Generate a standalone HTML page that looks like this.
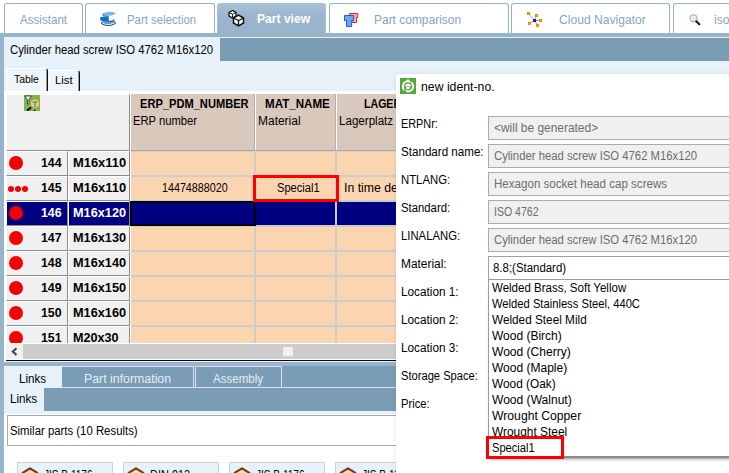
<!DOCTYPE html>
<html><head><meta charset="utf-8"><title>Part view</title>
<style>
*{box-sizing:border-box;margin:0;padding:0}
html,body{width:729px;height:473px;overflow:hidden;background:#fff}
body{position:relative;font-family:"Liberation Sans",sans-serif;font-size:12px;color:#000}
.a{position:absolute}
.t{position:absolute;white-space:nowrap;line-height:16px;height:16px;transform-origin:0 50%}
.b{font-weight:bold}
.tab{position:absolute;top:3px;height:30px;background:#fff;border:1px solid #98b2c7;border-bottom:none;border-radius:3px 3px 0 0}
.tab.act{background:linear-gradient(#a9c1d4,#9bb6cc 40%,#98b4ca);border-color:#a9c1d4}
.bg{background:#7b9cb5}
.lb{background:#e6f1f9}
.rh{position:absolute;background:#f0f0f0;height:25px;border-top:1px solid #fff;border-left:1px solid #fff;border-right:1px solid #8c8c8c}
.cell{position:absolute;background:#fbd5b0;height:24px}
.dot{position:absolute;width:14px;height:14px;border-radius:50%;background:#f40000}
.sd{position:absolute;width:6px;height:6px;border-radius:50%;background:#f40000}
.inp{position:absolute;left:488px;width:260px;height:24px;background:#f0f0f0;border:1px solid #ababab}
.card{position:absolute;top:462px;width:96px;height:20px;background:#e6f1f9;border:1px solid #c3d6e4}
</style></head><body>

<!-- frame + bands -->
<div class="a" style="left:0;top:33px;width:729px;height:4px;background:#98b4ca"></div>
<div class="a" style="left:0;top:33px;width:4px;height:440px;background:#98b4ca"></div>
<div class="a lb" style="left:4px;top:37px;width:725px;height:55px"></div>
<div class="a bg" style="left:220px;top:38px;width:509px;height:23px"></div>

<!-- top tabs -->
<div class="tab" style="left:4px;width:79px"></div>
<div class="tab" style="left:85px;width:130px"></div>
<div class="tab act" style="left:217px;width:109px"></div>
<div class="tab" style="left:329px;width:180px"></div>
<div class="tab" style="left:511px;width:159px"></div>
<div class="tab" style="left:673px;width:70px"></div>

<!-- tab icons -->
<svg class="a" style="left:100px;top:11px" width="17" height="16" viewBox="0 0 17 16">
 <path d="M1.6 11.4 Q8.5 8.6 15.2 11.2 L15.2 12.6 Q8.5 16.4 1.6 12.8Z" fill="#fff" stroke="#1c3f66" stroke-width="1"/>
 <path d="M1.4 11.2 Q8.5 8.4 15.4 11 Q12 13 8.5 13.2 Q5 13.4 1.4 11.2Z" fill="#5a9fe0"/>
 <path d="M0.2 6.6 Q7 4 14.8 6.4 L14.8 8.8 Q8 11.6 0.5 9.6Z" fill="#fff"/>
 <path d="M8.5 10.6 Q12 10.4 14.8 8.8" fill="none" stroke="#1c3f66" stroke-width=".9"/>
 <path d="M0.1 6.2 Q4 4.8 8.8 5.8 L8.8 10.8 Q4 11 0.4 9.6Z" fill="#1a6cb8"/>
 <path d="M2.3 2.6 Q9 -0.6 16 2.4 L16 4.6 Q12 6.8 9 6.6 L9 4.4Z" fill="#fff"/>
 <path d="M2.2 2.4 Q9 -0.8 16.1 2.2 Q12.5 4.8 9 4.8 Q5 4.8 2.2 2.4Z" fill="#7db5e6"/>
 <path d="M2.2 2.4 Q5 4.8 9 4.8 L9 6.6 Q5 6.6 2.5 4.8Z" fill="#3f8fd8"/>
</svg>
<svg class="a" style="left:227px;top:9px" width="19" height="18" viewBox="0 0 19 18">
 <path d="M2 3.5 L5.5 1.5 L9 3.5 L9 7 L5.5 9 L2 7Z" fill="#fff" stroke="#111" stroke-width="1.3"/>
 <path d="M2 3.5 L5.5 5.2 L9 3.5 M5.5 5.2 V9" fill="none" stroke="#111" stroke-width=".9"/>
 <path d="M6.5 9 L11.5 6.2 L16.5 9 L16.5 14 L11.5 16.8 L6.5 14Z" fill="#fff" stroke="#111" stroke-width="1.5"/>
 <path d="M6.5 9 L11.5 11.6 L16.5 9 M11.5 11.6 L11.5 16.8" fill="none" stroke="#111" stroke-width="1.3"/>
</svg>
<svg class="a" style="left:344px;top:13px" width="15" height="15" viewBox="0 0 15 15">
 <path d="M5.5 0.5 H13.7 V4.5 H12.6 V9.5 H8 V4.5 H5.5Z" fill="#f6aaaa" stroke="#f02222" stroke-width="1"/>
 <path d="M0.5 2.5 H9.6 V7.5 H7.7 V13.5 H2.5 V7.5 H0.5Z" fill="#6ea6e8" stroke="#1565d0" stroke-width="1"/>
</svg>
<svg class="a" style="left:526px;top:11px" width="17" height="17" viewBox="0 0 17 17">
 <path d="M2.5 2.5 L8.6 9.5 L10.4 4.4 M8.6 9.5 L3.5 12.3 M8.6 9.5 L14.5 9.5 M8.6 9.5 L11.5 14.4" stroke="#9a9a9a" stroke-width=".9" fill="none"/>
 <rect x="7.1" y="8" width="3" height="3" fill="#1212dd"/>
 <g fill="#e08a00"><rect x="1" y="1" width="3" height="3"/><rect x="8.9" y="2.9" width="3" height="3"/><rect x="13" y="8" width="3" height="3"/><rect x="2" y="10.8" width="3" height="3"/><rect x="10" y="12.9" width="3" height="3"/></g>
 <g fill="#ffc21a"><rect x="2" y="2" width="1" height="1"/><rect x="9.9" y="3.9" width="1" height="1"/><rect x="14" y="9" width="1" height="1"/><rect x="3" y="11.8" width="1" height="1"/><rect x="11" y="13.9" width="1" height="1"/></g>
</svg>
<svg class="a" style="left:688px;top:13px" width="14" height="14" viewBox="0 0 14 14">
 <circle cx="5.5" cy="5.3" r="3.6" fill="#dcf0f7" stroke="#a8a8a8" stroke-width="1.1"/>
 <path d="M8.3 8.3 L11.3 11.2" stroke="#1a1a1a" stroke-width="2.2" stroke-linecap="round"/>
</svg>

<!-- Table / List tabs -->
<div class="a" style="left:6px;top:68px;width:42px;height:24px;background:#eef5fb;border-top:1px solid #fff;border-left:1px solid #fff;border-right:1px solid #0c0c0c;box-shadow:inset -1px 0 0 rgba(0,0,0,.35);border-radius:3px 3px 0 0"></div>
<div class="a" style="left:48px;top:70px;width:32px;height:21px;background:#eef5fb;border-top:1px solid #fff;border-right:1px solid #0c0c0c;box-shadow:inset -1px 0 0 rgba(0,0,0,.35);border-radius:0 3px 0 0"></div>
<div class="a" style="left:4px;top:91px;width:392px;height:3px;background:#fff"></div>

<!-- grid area -->
<div class="a" style="left:4px;top:92px;width:392px;height:270px;background:#fff"></div>
<div class="a" style="left:131px;top:94px;width:265px;height:249px;background:#cdcccc"></div>
<div class="a" style="left:6px;top:94px;width:124px;height:57px;background:#f0f0f0;border-right:1px solid #8c8c8c;border-bottom:1px solid #8c8c8c;border-top:1px solid #fff;border-left:1px solid #fff"></div>
<div class="a" style="left:131px;top:94px;width:125px;height:56px;background:#d9c9bc;border-right:1px solid #fff"></div><div class="a" style="left:254px;top:94px;width:1px;height:56px;background:#b9ada3"></div>
<div class="a" style="left:256px;top:94px;width:81px;height:56px;background:#d9c9bc;border-right:1px solid #fff"></div><div class="a" style="left:335px;top:94px;width:1px;height:56px;background:#b9ada3"></div>
<div class="a" style="left:337px;top:94px;width:60px;height:56px;background:#d9c9bc"></div>
<div class="a" style="left:131px;top:150px;width:266px;height:1px;background:#a9a9a9"></div><div class="a" style="left:131px;top:151px;width:266px;height:1px;background:#d6cfc8"></div>
<svg class="a" style="left:24px;top:95px" width="16" height="16" viewBox="0 0 16 16">
 <rect width="16" height="16" fill="#6cbf4a"/>
 <path d="M0.6 1 L7.4 1 L5 4.6 L5 9 L3.4 9 L3.4 4.6Z" fill="#f2f2f2" stroke="#3a3a3a" stroke-width=".9"/>
 <path d="M7.6 12 L3 15.6" stroke="#111" stroke-width="2.2"/>
 <path d="M9.2 16 L10.6 14.6 L12 16Z" fill="#111"/>
 <circle cx="11" cy="8.6" r="4.8" fill="#aee3a0" stroke="#e8821a" stroke-width="1.4"/>
 <path d="M8.4 7 H13.6 M11 7 V12" stroke="#6f6f6f" stroke-width="1.1" fill="none"/>
</svg>

<div class="rh" style="left:6px;top:151px;width:62px;height:25px;background:#f0f0f0;border-bottom:1px solid #8c8c8c;"></div>
<div class="rh" style="left:68px;top:151px;width:62px;height:25px;background:#f0f0f0;border-bottom:1px solid #8c8c8c;"></div>
<div class="dot" style="left:9px;top:156px"></div>
<div class="cell" style="left:131px;top:152px;width:123px;height:23px;background:#fbd5b0"></div>
<div class="cell" style="left:256px;top:152px;width:79px;height:23px;background:#fbd5b0"></div>
<div class="cell" style="left:337px;top:152px;width:60px;height:23px;background:#fbd5b0"></div>
<div class="rh" style="left:6px;top:176px;width:62px;height:25px;background:#f0f0f0;border-bottom:1px solid #8c8c8c;"></div>
<div class="rh" style="left:68px;top:176px;width:62px;height:25px;background:#f0f0f0;border-bottom:1px solid #8c8c8c;"></div>
<div class="sd" style="left:8px;top:186px"></div>
<div class="sd" style="left:15px;top:186px"></div>
<div class="sd" style="left:22px;top:186px"></div>
<div class="cell" style="left:131px;top:177px;width:123px;height:23px;background:#fbd5b0"></div>
<div class="cell" style="left:256px;top:177px;width:79px;height:23px;background:#fbd5b0"></div>
<div class="cell" style="left:337px;top:177px;width:60px;height:23px;background:#fbd5b0"></div>
<div class="rh" style="left:6px;top:201px;width:62px;height:25px;background:#000080;border-bottom:1px solid #8c8c8c;"></div>
<div class="rh" style="left:68px;top:201px;width:62px;height:25px;background:#000080;border-bottom:1px solid #8c8c8c;"></div>
<div class="dot" style="left:9px;top:206px"></div>
<div class="cell" style="left:131px;top:202px;width:123px;height:23px;background:#000080"></div>
<div class="cell" style="left:256px;top:202px;width:79px;height:23px;background:#000080"></div>
<div class="cell" style="left:337px;top:202px;width:60px;height:23px;background:#000080"></div>
<div class="rh" style="left:6px;top:226px;width:62px;height:25px;background:#f0f0f0;border-bottom:1px solid #8c8c8c;"></div>
<div class="rh" style="left:68px;top:226px;width:62px;height:25px;background:#f0f0f0;border-bottom:1px solid #8c8c8c;"></div>
<div class="dot" style="left:9px;top:231px"></div>
<div class="cell" style="left:131px;top:227px;width:123px;height:23px;background:#fbd5b0"></div>
<div class="cell" style="left:256px;top:227px;width:79px;height:23px;background:#fbd5b0"></div>
<div class="cell" style="left:337px;top:227px;width:60px;height:23px;background:#fbd5b0"></div>
<div class="rh" style="left:6px;top:251px;width:62px;height:25px;background:#f0f0f0;border-bottom:1px solid #8c8c8c;"></div>
<div class="rh" style="left:68px;top:251px;width:62px;height:25px;background:#f0f0f0;border-bottom:1px solid #8c8c8c;"></div>
<div class="dot" style="left:9px;top:256px"></div>
<div class="cell" style="left:131px;top:252px;width:123px;height:23px;background:#fbd5b0"></div>
<div class="cell" style="left:256px;top:252px;width:79px;height:23px;background:#fbd5b0"></div>
<div class="cell" style="left:337px;top:252px;width:60px;height:23px;background:#fbd5b0"></div>
<div class="rh" style="left:6px;top:276px;width:62px;height:25px;background:#f0f0f0;border-bottom:1px solid #8c8c8c;"></div>
<div class="rh" style="left:68px;top:276px;width:62px;height:25px;background:#f0f0f0;border-bottom:1px solid #8c8c8c;"></div>
<div class="dot" style="left:9px;top:281px"></div>
<div class="cell" style="left:131px;top:277px;width:123px;height:23px;background:#fbd5b0"></div>
<div class="cell" style="left:256px;top:277px;width:79px;height:23px;background:#fbd5b0"></div>
<div class="cell" style="left:337px;top:277px;width:60px;height:23px;background:#fbd5b0"></div>
<div class="rh" style="left:6px;top:301px;width:62px;height:25px;background:#f0f0f0;border-bottom:1px solid #8c8c8c;"></div>
<div class="rh" style="left:68px;top:301px;width:62px;height:25px;background:#f0f0f0;border-bottom:1px solid #8c8c8c;"></div>
<div class="dot" style="left:9px;top:306px"></div>
<div class="cell" style="left:131px;top:302px;width:123px;height:23px;background:#fbd5b0"></div>
<div class="cell" style="left:256px;top:302px;width:79px;height:23px;background:#fbd5b0"></div>
<div class="cell" style="left:337px;top:302px;width:60px;height:23px;background:#fbd5b0"></div>
<div class="rh" style="left:6px;top:326px;width:62px;height:17px;background:#f0f0f0;"></div>
<div class="rh" style="left:68px;top:326px;width:62px;height:17px;background:#f0f0f0;"></div>
<div class="dot" style="left:9px;top:331px"></div>
<div class="cell" style="left:131px;top:327px;width:123px;height:16px;background:#fbd5b0"></div>
<div class="cell" style="left:256px;top:327px;width:79px;height:16px;background:#fbd5b0"></div>
<div class="cell" style="left:337px;top:327px;width:60px;height:16px;background:#fbd5b0"></div>
<div class="a" style="left:130px;top:201px;width:126px;height:25px;border:2px solid #000"></div>
<div class="a" style="left:253px;top:175px;width:86px;height:27px;border:3px solid #f00"></div>

<!-- h scrollbar -->
<div class="a" style="left:6px;top:343px;width:390px;height:1px;background:#fff"></div>
<div class="a" style="left:6px;top:344px;width:390px;height:15px;background:#cdcdcd"></div>
<div class="a" style="left:6px;top:344px;width:17px;height:15px;background:#f0f0f0"></div>
<svg class="a" style="left:10px;top:347px" width="8" height="10" viewBox="0 0 8 10"><path d="M6.5 1.2 L2.8 4.6 L6.5 8" fill="none" stroke="#454545" stroke-width="2.1"/></svg>
<div class="a" style="left:283px;top:347px;width:10px;height:9px;background:#f0f0f0"></div>
<div class="a" style="left:6px;top:360px;width:390px;height:1px;background:#0a0a0a"></div>

<!-- lower panel -->
<div class="a lb" style="left:4px;top:361px;width:392px;height:54px"></div>
<div class="a" style="left:4px;top:362px;width:392px;height:4px;background:#98b4ca"></div>
<div class="a bg" style="left:62px;top:366px;width:334px;height:22px"></div>
<div class="a" style="left:62px;top:366px;width:132px;height:22px;border:1px solid #d6e3ed;border-bottom:none;border-left:none"></div>
<div class="a" style="left:195px;top:366px;width:87px;height:22px;border:1px solid #d6e3ed;border-bottom:none"></div>
<div class="a" style="left:62px;top:387px;width:334px;height:1px;background:#d6e3ed"></div>
<div class="a bg" style="left:44px;top:388px;width:352px;height:23px"></div>
<div class="a" style="left:4px;top:414px;width:392px;height:60px;background:#fff"></div>
<div class="a" style="left:7px;top:415px;width:400px;height:31px;background:#fff;border:1px solid #a8a8a8"></div>
<div class="card" style="left:17px"></div>
<div class="card" style="left:123px"></div>
<div class="card" style="left:229px"></div>
<div class="card" style="left:335px"></div>
<svg class="a" style="left:21px;top:466px" width="18" height="12" viewBox="0 0 18 12"><path d="M1.6 6.8 L9 2.4 L16.4 6.8 L16.4 12 L1.6 12Z" fill="#f9d9b0" stroke="#74390a" stroke-width="2.1" stroke-linejoin="round"/></svg>
<svg class="a" style="left:127px;top:466px" width="18" height="12" viewBox="0 0 18 12"><path d="M1.6 6.8 L9 2.4 L16.4 6.8 L16.4 12 L1.6 12Z" fill="#f9d9b0" stroke="#74390a" stroke-width="2.1" stroke-linejoin="round"/></svg>
<svg class="a" style="left:233px;top:466px" width="18" height="12" viewBox="0 0 18 12"><path d="M1.6 6.8 L9 2.4 L16.4 6.8 L16.4 12 L1.6 12Z" fill="#f9d9b0" stroke="#74390a" stroke-width="2.1" stroke-linejoin="round"/></svg>
<svg class="a" style="left:339px;top:466px" width="18" height="12" viewBox="0 0 18 12"><path d="M1.6 6.8 L9 2.4 L16.4 6.8 L16.4 12 L1.6 12Z" fill="#f9d9b0" stroke="#74390a" stroke-width="2.1" stroke-linejoin="round"/></svg>

<div class="t" style="left:19.9px;top:12px;transform:scaleX(0.9674);color:#86a5be">Assistant</div>
<div class="t" style="left:127.4px;top:12px;transform:scaleX(0.9504);color:#86a5be">Part selection</div>
<div class="t b" style="left:256.9px;top:11px;transform:scaleX(1.0075);color:#fff">Part view</div>
<div class="t" style="left:374.4px;top:12px;transform:scaleX(0.9969);color:#86a5be">Part comparison</div>
<div class="t" style="left:559.1px;top:12px;transform:scaleX(1.0093);color:#86a5be">Cloud Navigator</div>
<div class="t" style="left:714.4px;top:12px;transform:scaleX(1.0167);color:#86a5be">iso</div>
<div class="t" style="left:9.9px;top:42px;transform:scaleX(0.9427);">Cylinder head screw ISO 4762 M16x120</div>
<div class="t" style="left:13.9px;top:71px;transform:scaleX(0.9450);font-size:11px">Table</div>
<div class="t" style="left:54.9px;top:72px;transform:scaleX(1.0277);font-size:11px">List</div>
<div class="t b" style="left:140.4px;top:96px;transform:scaleX(0.9254);">ERP_PDM_NUMBER</div>
<div class="t" style="left:133.4px;top:113px;transform:scaleX(0.9360);">ERP number</div>
<div class="t b" style="left:265.1px;top:96px;transform:scaleX(0.9663);">MAT_NAME</div>
<div class="t" style="left:257.9px;top:113px;transform:scaleX(0.9980);">Material</div>
<div class="t b" style="left:363.9px;top:96px;transform:scaleX(0.8833);">LAGER</div>
<div class="t" style="left:339.4px;top:113px;transform:scaleX(0.9653);">Lagerplatz</div>
<div class="t b" style="left:41.4px;top:155px;transform:scaleX(1.0284);color:#000">144</div>
<div class="t b" style="left:72.9px;top:155px;transform:scaleX(1.0751);color:#000">M16x110</div>
<div class="t b" style="left:41.4px;top:180px;transform:scaleX(1.0284);color:#000">145</div>
<div class="t b" style="left:72.9px;top:180px;transform:scaleX(1.0751);color:#000">M16x110</div>
<div class="t b" style="left:41.4px;top:205px;transform:scaleX(1.0284);color:#fff">146</div>
<div class="t b" style="left:72.9px;top:205px;transform:scaleX(1.0610);color:#fff">M16x120</div>
<div class="t b" style="left:41.4px;top:230px;transform:scaleX(1.0284);color:#000">147</div>
<div class="t b" style="left:72.9px;top:230px;transform:scaleX(1.0610);color:#000">M16x130</div>
<div class="t b" style="left:41.4px;top:255px;transform:scaleX(1.0284);color:#000">148</div>
<div class="t b" style="left:72.9px;top:255px;transform:scaleX(1.0610);color:#000">M16x140</div>
<div class="t b" style="left:41.4px;top:280px;transform:scaleX(1.0284);color:#000">149</div>
<div class="t b" style="left:72.9px;top:280px;transform:scaleX(1.0610);color:#000">M16x150</div>
<div class="t b" style="left:41.4px;top:305px;transform:scaleX(1.0284);color:#000">150</div>
<div class="t b" style="left:72.9px;top:305px;transform:scaleX(1.0610);color:#000">M16x160</div>
<div class="t b" style="left:41.4px;top:330px;transform:scaleX(1.0284);color:#000">151</div>
<div class="t b" style="left:72.9px;top:330px;transform:scaleX(1.0513);color:#000">M20x30</div>
<div class="t" style="left:162.4px;top:180px;transform:scaleX(0.8935);">14474888020</div>
<div class="t" style="left:276.9px;top:180px;transform:scaleX(0.9255);">Special1</div>
<div class="t" style="left:344.4px;top:180px;transform:scaleX(1.0235);">In time delivery</div>
<div class="t" style="left:18.9px;top:370.5px;transform:scaleX(0.9673);">Links</div>
<div class="t" style="left:83.9px;top:371px;transform:scaleX(1.0283);color:#e3edf5">Part information</div>
<div class="t" style="left:212.9px;top:371px;transform:scaleX(0.9632);color:#e3edf5">Assembly</div>
<div class="t" style="left:9.9px;top:391px;transform:scaleX(0.9673);">Links</div>
<div class="t" style="left:9.9px;top:423px;transform:scaleX(0.9473);">Similar parts (10 Results)</div>
<div class="t" style="left:43.6px;top:466.6px;transform:scaleX(0.8404);">JIS B 1176</div>
<div class="t" style="left:149.6px;top:466.6px;transform:scaleX(0.9130);">DIN 912</div>
<div class="t" style="left:255.6px;top:466.6px;transform:scaleX(0.8404);">JIS B 1176</div>
<div class="t" style="left:361.6px;top:466.6px;transform:scaleX(0.8404);">JIS B 1176</div>

<!-- dialog -->
<div class="a" style="left:396px;top:74px;width:340px;height:410px;background:#fff;box-shadow:0 0 5px rgba(0,0,0,.10)"></div>
<svg class="a" style="left:400px;top:78px" width="16" height="16" viewBox="0 0 16 16">
 <rect width="16" height="16" fill="#57a63e"/>
 <circle cx="8" cy="8.4" r="5.1" fill="none" stroke="#fff" stroke-width="2"/>
 <path d="M9.6 1 L11.4 4.6 M4.4 11.6 L6.2 15.6" stroke="#57a63e" stroke-width="1.2"/>
 <path d="M6.2 2.8 L8 0.9 L9.8 2.8Z" fill="#fff"/>
 <path d="M4.9 7.2 Q8 3.8 11.1 7.2 L11.1 7.9 L4.9 7.9Z" fill="#fff"/>
 <path d="M5.6 8.4 H10.4 Q10.4 11 8 11.6 Q5.6 11 5.6 8.4Z" fill="#e4f1de"/>
</svg>

<div class="inp" style="top:116px"></div>
<div class="inp" style="top:144px"></div>
<div class="inp" style="top:172px"></div>
<div class="inp" style="top:200px"></div>
<div class="inp" style="top:228px"></div>
<div class="inp" style="top:256px;background:#fff;border-color:#a0a0a0"></div>

<!-- dropdown -->
<div class="a" style="left:488px;top:279px;width:260px;height:179px;background:#fff;border:1px solid #9a9a9a;border-bottom:2px solid #8a8a8a;box-shadow:0 3px 3px -2px rgba(0,0,0,.45)"></div>
<div class="t" style="left:421.4px;top:79px;transform:scaleX(1.0216);">new ident-no.</div>
<div class="t" style="left:400.9px;top:116px;transform:scaleX(0.9060);">ERPNr:</div>
<div class="t" style="left:400.9px;top:144px;transform:scaleX(0.9673);">Standard name:</div>
<div class="t" style="left:400.9px;top:172px;transform:scaleX(0.9439);">NTLANG:</div>
<div class="t" style="left:400.9px;top:200px;transform:scaleX(0.9434);">Standard:</div>
<div class="t" style="left:400.9px;top:228px;transform:scaleX(0.9425);">LINALANG:</div>
<div class="t" style="left:400.9px;top:256px;transform:scaleX(0.9910);">Material:</div>
<div class="t" style="left:400.9px;top:284px;transform:scaleX(0.9809);">Location 1:</div>
<div class="t" style="left:400.9px;top:312px;transform:scaleX(0.9809);">Location 2:</div>
<div class="t" style="left:400.9px;top:340px;transform:scaleX(0.9809);">Location 3:</div>
<div class="t" style="left:400.9px;top:368px;transform:scaleX(0.9289);">Storage Space:</div>
<div class="t" style="left:400.9px;top:396px;transform:scaleX(0.9320);">Price:</div>
<div class="t" style="left:494.4px;top:120px;transform:scaleX(0.9938);color:#6d6d6d">&lt;will be generated&gt;</div>
<div class="t" style="left:493.9px;top:148px;transform:scaleX(0.9427);color:#6d6d6d">Cylinder head screw ISO 4762 M16x120</div>
<div class="t" style="left:493.9px;top:176px;transform:scaleX(0.9647);color:#6d6d6d">Hexagon socket head cap screws</div>
<div class="t" style="left:493.9px;top:204px;transform:scaleX(0.8796);color:#6d6d6d">ISO 4762</div>
<div class="t" style="left:493.9px;top:232px;transform:scaleX(0.9427);color:#6d6d6d">Cylinder head screw ISO 4762 M16x120</div>
<div class="t" style="left:493.4px;top:260px;transform:scaleX(0.9528);">8.8;(Standard)</div>
<div class="t" style="left:491.8px;top:279.6px;transform:scaleX(0.9595);">Welded Brass, Soft Yellow</div>
<div class="t" style="left:491.8px;top:295.6px;transform:scaleX(0.9332);">Welded Stainless Steel, 440C</div>
<div class="t" style="left:491.8px;top:311.6px;transform:scaleX(0.9813);">Welded Steel Mild</div>
<div class="t" style="left:491.8px;top:327.6px;transform:scaleX(0.9986);">Wood (Birch)</div>
<div class="t" style="left:491.8px;top:343.6px;transform:scaleX(1.0029);">Wood (Cherry)</div>
<div class="t" style="left:491.8px;top:359.6px;transform:scaleX(1.0008);">Wood (Maple)</div>
<div class="t" style="left:491.8px;top:375.6px;transform:scaleX(0.9881);">Wood (Oak)</div>
<div class="t" style="left:491.8px;top:391.6px;transform:scaleX(1.0043);">Wood (Walnut)</div>
<div class="t" style="left:491.8px;top:407.6px;transform:scaleX(1.0156);">Wrought Copper</div>
<div class="t" style="left:491.8px;top:423.6px;transform:scaleX(0.9917);">Wrought Steel</div>
<div class="t" style="left:491.8px;top:439.6px;transform:scaleX(0.9276);">Special1</div>
<div class="a" style="left:486px;top:436px;width:78px;height:23px;border:3px solid #f00"></div>

</body></html>
